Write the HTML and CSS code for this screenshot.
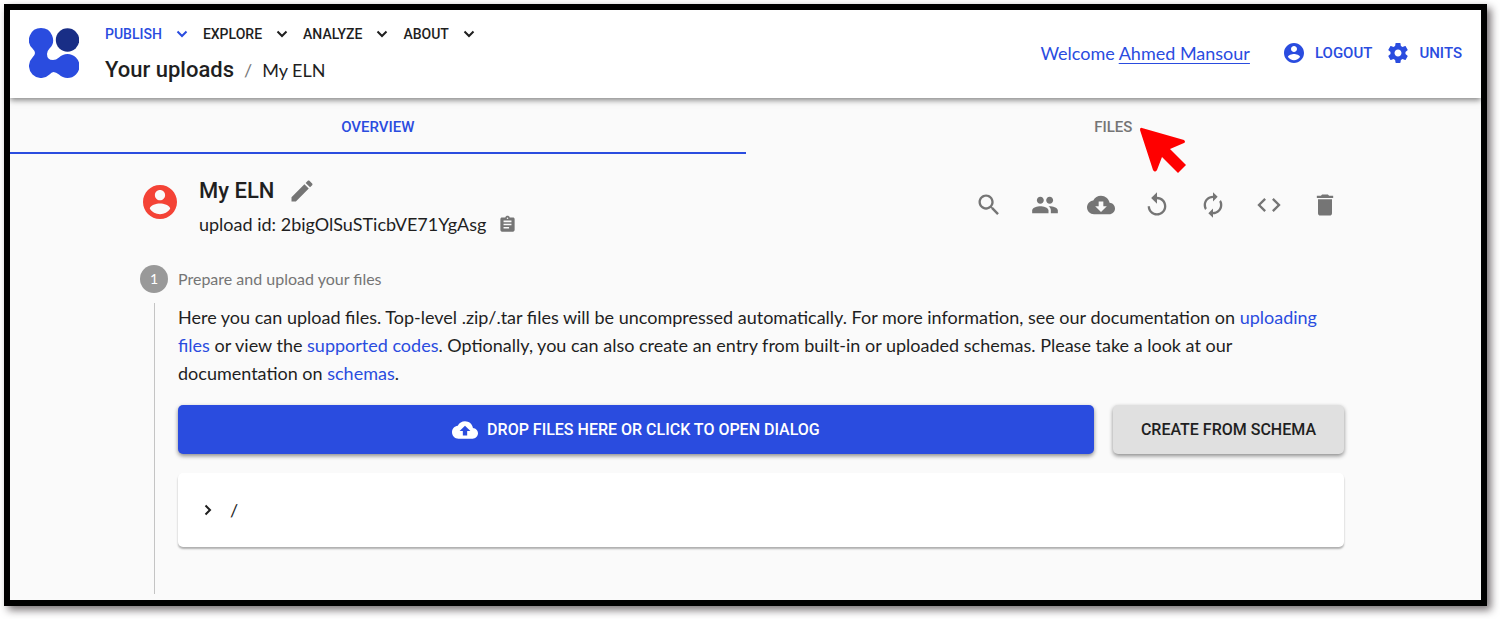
FILE: index.html
```html
<!DOCTYPE html>
<html lang="en">
<head>
<meta charset="utf-8">
<title>My ELN</title>
<link rel="stylesheet" href="styles.css">
</head>
<body>
<div class="frame">
  <header class="app-bar">
    <svg class="logo" viewBox="0 0 50 50" aria-hidden="true">
      <path fill="#2a4cdf" d="M12 0A12 12 0 0 1 20.500 20.500Q18 23 18 26Q18 32 24 32Q27 32 30 29.500A12 12 0 1 1 30 46.500Q27 44 24.500 44Q22.500 44 20.500 46.500A12 12 0 1 1 3.500 29.500Q6 27 6 25Q6 23 3.500 20.500A12 12 0 0 1 12 0Z"/>
      <circle cx="38.500" cy="12" r="11.700" fill="#192e86"/>
    </svg>
    <div class="bar-main">
      <nav class="menu">
        <button class="menu-item active">PUBLISH <svg class="chevron" viewBox="0 0 12 8"><path d="M1.500 1.500L6 6L10.500 1.500"/></svg></button>
        <button class="menu-item">EXPLORE <svg class="chevron" viewBox="0 0 12 8"><path d="M1.500 1.500L6 6L10.500 1.500"/></svg></button>
        <button class="menu-item">ANALYZE <svg class="chevron" viewBox="0 0 12 8"><path d="M1.500 1.500L6 6L10.500 1.500"/></svg></button>
        <button class="menu-item">ABOUT <svg class="chevron" viewBox="0 0 12 8"><path d="M1.500 1.500L6 6L10.500 1.500"/></svg></button>
      </nav>
      <div class="breadcrumb"><a class="crumb-root" href="#">Your uploads</a><span class="crumb-sep">/</span><span>My ELN</span></div>
    </div>
    <div class="account">
      <span class="welcome">Welcome <a href="#">Ahmed Mansour</a></span>
      <button class="account-button"><svg class="icon" viewBox="0 0 24 24"><path d="M12 2C6.480 2 2 6.480 2 12s4.480 10 10 10 10-4.480 10-10S17.520 2 12 2zm0 3c1.660 0 3 1.340 3 3s-1.340 3-3 3-3-1.340-3-3 1.340-3 3-3zm0 14.200c-2.500 0-4.710-1.280-6-3.220.030-1.990 4-3.080 6-3.080 1.990 0 5.970 1.090 6 3.080-1.290 1.940-3.500 3.220-6 3.220z"/></svg>LOGOUT</button>
      <button class="account-button"><svg class="icon" viewBox="0 0 24 24"><path d="M19.430 12.980c.040-.320.070-.640.070-.980s-.030-.660-.070-.980l2.110-1.650c.190-.150.240-.420.120-.640l-2-3.460c-.120-.220-.390-.300-.610-.220l-2.490 1c-.520-.400-1.080-.730-1.690-.980l-.380-2.650C14.460 2.180 14.250 2 14 2h-4c-.250 0-.460.180-.490.420l-.380 2.650c-.610.250-1.170.590-1.690.980l-2.490-1c-.230-.090-.490 0-.610.220l-2 3.460c-.130.220-.070.490.120.640l2.110 1.650c-.040.320-.070.650-.070.980s.030.660.070.980l-2.110 1.650c-.190.150-.240.420-.120.640l2 3.460c.120.220.390.300.610.220l2.490-1c.520.400 1.080.730 1.690.980l.380 2.650c.030.240.240.420.490.420h4c.250 0 .460-.180.490-.420l.380-2.650c.610-.250 1.170-.590 1.690-.980l2.490 1c.230.090.490 0 .610-.220l2-3.460c.120-.220.070-.490-.120-.640l-2.110-1.650zM12 15.500c-1.930 0-3.500-1.570-3.500-3.500s1.570-3.500 3.500-3.500 3.500 1.570 3.500 3.500-1.570 3.500-3.500 3.500z"/></svg>UNITS</button>
    </div>
  </header>

  <div class="tabs" role="tablist">
    <button class="tab selected" role="tab" aria-selected="true">OVERVIEW</button>
    <button class="tab" role="tab" aria-selected="false"><span class="tab-label">FILES<svg class="pointer" viewBox="0 0 46 46"><path d="M2 1L44 13Q46 15 44 16L30 22L46 38L38 46L22 30L17 43Q15 46 13 43L0 3Q0 0 2 1Z"/></svg></span></button>
  </div>

  <main class="content">
    <section class="upload-head">
      <svg class="avatar" viewBox="2 2 20 20" aria-hidden="true"><path d="M12 2C6.480 2 2 6.480 2 12s4.480 10 10 10 10-4.480 10-10S17.520 2 12 2zm0 3c1.660 0 3 1.340 3 3s-1.340 3-3 3-3-1.340-3-3 1.340-3 3-3zm0 14.200c-2.500 0-4.710-1.280-6-3.220.030-1.990 4-3.080 6-3.080 1.990 0 5.970 1.090 6 3.080-1.290 1.940-3.500 3.220-6 3.220z"/></svg>
      <div class="upload-info">
        <div class="title-row"><h1>My ELN</h1><button class="icon-button" aria-label="Edit name"><svg class="icon edit" viewBox="0 0 24 24"><path d="M3 17.250V21h3.750L17.810 9.940l-3.750-3.750L3 17.250zM20.710 7.040c.390-.390.390-1.020 0-1.410l-2.340-2.340c-.390-.390-1.020-.390-1.410 0l-1.830 1.830 3.750 3.750 1.830-1.830z"/></svg></button></div>
        <div class="id-row"><span>upload id: 2bigOlSuSTicbVE71YgAsg</span><button class="icon-button" aria-label="Copy id"><svg class="icon copy" viewBox="0 0 24 24"><path d="M19 3h-4.180C14.400 1.840 13.300 1 12 1c-1.300 0-2.400.840-2.820 2H5c-1.100 0-2 .900-2 2v14c0 1.100.900 2 2 2h14c1.100 0 2-.900 2-2V5c0-1.100-.900-2-2-2zm-7 0c.550 0 1 .450 1 1s-.450 1-1 1-1-.450-1-1 .450-1 1-1zm2 14H7v-2h7v2zm3-4H7v-2h10v2zm0-4H7V7h10v2z"/></svg></button></div>
      </div>
      <div class="actions">
        <button class="icon-button" aria-label="Search"><svg class="icon action" viewBox="0 0 24 24"><path d="M15.500 14h-.790l-.280-.270C15.410 12.590 16 11.110 16 9.500 16 5.910 13.090 3 9.500 3S3 5.910 3 9.500 5.910 16 9.500 16c1.610 0 3.090-.590 4.230-1.570l.270.280v.790l5 4.990L20.490 19l-4.990-5zm-6 0C7.010 14 5 11.990 5 9.500S7.010 5 9.500 5 14 7.010 14 9.500 11.990 14 9.500 14z"/></svg></button>
        <button class="icon-button" aria-label="Members"><svg class="icon action" viewBox="0 0 24 24"><path d="M16 11c1.660 0 2.990-1.340 2.990-3S17.660 5 16 5c-1.660 0-3 1.340-3 3s1.340 3 3 3zm-8 0c1.660 0 2.990-1.340 2.990-3S9.660 5 8 5C6.340 5 5 6.340 5 8s1.340 3 3 3zm0 2c-2.330 0-7 1.170-7 3.500V19h14v-2.500c0-2.330-4.670-3.500-7-3.500zm8 0c-.290 0-.620.020-.970.050 1.160.840 1.970 1.970 1.970 3.450V19h6v-2.500c0-2.330-4.670-3.500-7-3.500z"/></svg></button>
        <button class="icon-button" aria-label="Download"><svg class="icon action" viewBox="0 0 24 24"><path d="M19.350 10.040C18.670 6.590 15.640 4 12 4 9.110 4 6.600 5.640 5.350 8.040 2.340 8.360 0 10.910 0 14c0 3.310 2.690 6 6 6h13c2.760 0 5-2.240 5-5 0-2.640-2.050-4.780-4.650-4.960zM17 13l-5 5-5-5h3V9h4v4h3z"/></svg></button>
        <button class="icon-button" aria-label="Reload"><svg class="icon action" viewBox="0 0 24 24"><path d="M12 5V1L7 6l5 5V7c3.310 0 6 2.690 6 6s-2.690 6-6 6-6-2.690-6-6H4c0 4.420 3.580 8 8 8s8-3.580 8-8-3.580-8-8-8z"/></svg></button>
        <button class="icon-button" aria-label="Reprocess"><svg class="icon action" viewBox="0 0 24 24"><path d="M12 6v3l4-4-4-4v3c-4.420 0-8 3.580-8 8 0 1.570.460 3.030 1.240 4.260L6.700 14.800c-.450-.830-.700-1.790-.700-2.800 0-3.310 2.690-6 6-6zm6.760 1.740L17.300 9.200c.440.840.700 1.790.700 2.800 0 3.310-2.690 6-6 6v-3l-4 4 4 4v-3c4.420 0 8-3.580 8-8 0-1.570-.460-3.030-1.240-4.260z"/></svg></button>
        <button class="icon-button" aria-label="API"><svg class="icon action" viewBox="0 0 24 24"><path d="M9.400 16.600L4.800 12l4.600-4.600L8 6l-6 6 6 6 1.400-1.400zm5.200 0l4.600-4.600-4.600-4.600L16 6l6 6-6 6-1.400-1.400z"/></svg></button>
        <button class="icon-button" aria-label="Delete"><svg class="icon action" viewBox="0 0 24 24"><path d="M6 19c0 1.100.900 2 2 2h8c1.100 0 2-.900 2-2V7H6v12zM19 4h-3.500l-1-1h-5l-1 1H5v2h14V4z"/></svg></button>
      </div>
    </section>

    <section class="step">
      <div class="step-head"><span class="step-number">1</span><h2>Prepare and upload your files</h2></div>
      <div class="step-body">
        <p>Here you can upload files. Top-level .zip/.tar files will be uncompressed automatically. For more information, see our documentation on <a href="#">uploading files</a> or view the <a href="#">supported codes</a>. Optionally, you can also create an entry from built-in or uploaded schemas. Please take a look at our documentation on <a href="#">schemas</a>.</p>
        <div class="buttons">
          <button class="button primary"><svg class="icon upload" viewBox="0 0 24 24"><path d="M19.350 10.040C18.670 6.590 15.640 4 12 4 9.110 4 6.600 5.640 5.350 8.040 2.340 8.360 0 10.910 0 14c0 3.310 2.690 6 6 6h13c2.760 0 5-2.240 5-5 0-2.640-2.050-4.780-4.650-4.960zM14 13v4h-4v-4H7l5-5 5 5h-3z"/></svg>DROP FILES HERE OR CLICK TO OPEN DIALOG</button>
          <button class="button secondary">CREATE FROM SCHEMA</button>
        </div>
        <div class="file-card"><button class="folder"><svg class="expand" viewBox="0 0 8 12"><path d="M1.500 1.500L6 6L1.500 10.500"/></svg>/</button></div>
      </div>
    </section>
  </main>
</div>
</body>
</html>
```
FILE: styles.css
```css
* { box-sizing: border-box; }
body {
  margin: 0;
  padding: 4px 13px 13px 4px;
  background: #fff;
  color: #1f1f1f;
  font: 18px/28px Lato, "Liberation Sans", sans-serif;
}
a { color: #2a4cdf; text-decoration: none; }
button {
  padding: 0;
  border: 0;
  background: none;
  color: inherit;
  font: inherit;
  cursor: pointer;
}
h1, h2, p { margin: 0; }
.icon { display: block; flex: none; fill: currentColor; width: 24px; height: 24px; }
.frame {
  min-height: calc(100vh - 17px);
  display: flex;
  flex-direction: column;
  border: 6px solid #000;
  background: #fafafa;
  box-shadow: 4px 4px 8px rgba(30, 20, 25, .6);
}
.app-bar {
  display: flex;
  align-items: center;
  min-height: 88px;
  padding: 0 19px 2px;
  background: #fff;
  box-shadow: 0 2px 6px rgba(0, 0, 0, .5);
  position: relative;
}
.logo { flex: none; width: 50px; height: 50px; margin-right: 26px; }
.bar-main { flex: 1; padding-bottom: 2px; }
.menu { display: flex; gap: 15px; }
.menu-item,
.account-button,
.tab,
.button,
.crumb-root,
h1 { font-family: Roboto, "Liberation Sans", sans-serif; font-weight: 500; }
.menu-item {
  display: flex;
  align-items: center;
  gap: 14px;
  font-size: 14px;
  line-height: 36px;
}
.menu-item.active { color: #2a4cdf; }
.chevron, .expand { fill: none; stroke: currentColor; stroke-width: 2; }
.chevron { width: 12px; height: 8px; }
.breadcrumb { display: flex; align-items: center; line-height: 36px; }
.crumb-root { color: #1f1f1f; font-size: 22px; }
.crumb-sep { margin: 0 10px; color: #777; }
.account { display: flex; align-items: center; color: #2a4cdf; }
.welcome { margin-right: 32px; }
.welcome a { text-decoration: underline; text-underline-offset: 3px; text-decoration-thickness: 1px; }
.account-button {
  display: flex;
  align-items: center;
  gap: 9px;
  font-size: 15px;
}
.account-button + .account-button { margin-left: 14px; }
.tabs { display: grid; grid-template-columns: 1fr 1fr; }
.tab {
  height: 56px;
  padding-top: 3px;
  border-bottom: 2px solid transparent;
  color: #757575;
  font-size: 15px;
}
.tab.selected { color: #2a4cdf; border-color: #2a4cdf; }
.tab-label { position: relative; }
.pointer { position: absolute; left: calc(100% + 8px); top: 9px; width: 46px; height: 46px; fill: #f00; }
.content {
  flex: 1;
  display: flex;
  flex-direction: column;
  padding: 20px 137px 6px 130px;
}
.upload-head { display: flex; align-items: flex-start; }
.avatar { flex: none; width: 34px; height: 34px; margin: 11px 22px 0 3px; fill: #f44336; }
.upload-info { flex: 1; }
.title-row, .id-row { display: flex; align-items: center; }
.title-row { gap: 14px; height: 34px; }
.id-row { gap: 12px; height: 32px; }
h1 { font-size: 22px; }
.icon-button { color: #757575; }
.edit { width: 28px; height: 28px; }
.copy { width: 19px; height: 19px; }
.actions { display: flex; gap: 28px; padding: 17px 5px 0 0; }
.action { width: 28px; height: 28px; }
.step { flex: 1; display: flex; flex-direction: column; margin-top: 25px; }
.step-head { display: flex; align-items: center; gap: 10px; }
.step-number {
  display: grid;
  place-items: center;
  width: 28px;
  height: 28px;
  border-radius: 50%;
  background: #999;
  color: #fff;
  font-size: 14px;
}
h2 { color: #757575; font-size: 16px; font-weight: 400; }
.step-body { flex: 1; margin: 10px 0 0 14px; padding-left: 23px; border-left: 1px solid #c4c4c4; }
.buttons { display: flex; gap: 19px; margin: 18px 0 19px; }
.button {
  display: flex;
  align-items: center;
  justify-content: center;
  gap: 9px;
  min-height: 49px;
  padding: 0 28px;
  border-radius: 5px;
  box-shadow: 0 2px 4px rgba(0, 0, 0, .45);
  font-size: 16px;
}
.primary { flex: 1; background: #2a4cdf; color: #fff; }
.secondary { background: #e0e0e0; }
.upload { width: 26px; height: 26px; }
.file-card {
  padding: 23px 26px;
  border-radius: 5px;
  background: #fff;
  box-shadow: 0 2px 2px rgba(0, 0, 0, .3);
}
.folder { display: flex; align-items: center; gap: 18px; }
.expand { width: 8px; height: 12px; }
```
